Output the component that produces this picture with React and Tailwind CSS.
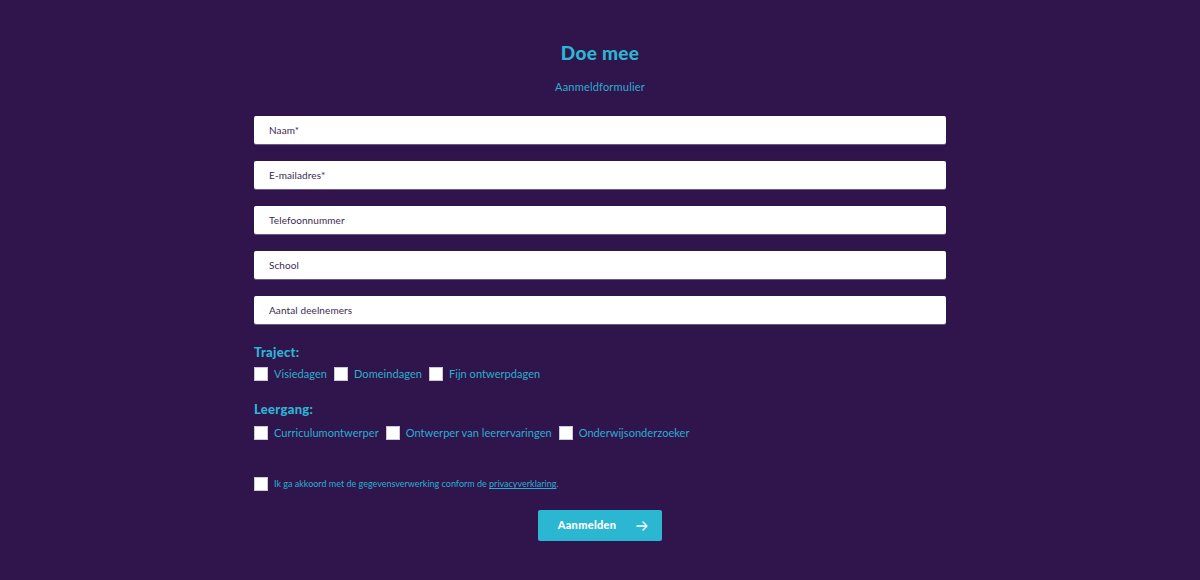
import React from "react";

const Box = () => (
  <span className="inline-block w-[14px] h-[14px] bg-white border border-[#c8c8d8] shrink-0" />
);

const Check = ({ label }) => (
  <label className="flex items-center gap-[6px]">
    <Box />
    <span className="text-[11px] text-[#2aaecf] tracking-[0.05px]">{label}</span>
  </label>
);

const Field = ({ ph }) => (
  <div className="h-[28px] bg-white rounded-[2px] flex items-center px-[15px] shadow-[0_1px_0_#6a5a8a]">
    <span className="text-[10px] text-[#3b2a52] tracking-[0.1px]">{ph}</span>
  </div>
);

export default function App() {
  return (
    <div
      className="w-[1200px] h-[580px] bg-[#30154c] flex flex-col items-center"
      style={{ fontFamily: "Lato, 'Open Sans', sans-serif" }}
    >
      <div className="w-[692px] flex flex-col">
        <h1 className="mt-[42px] text-center text-[19px] font-black text-[#2cb6d2] tracking-[0.3px] leading-[22px]">
          Doe mee
        </h1>
        <p className="mt-[16px] text-center text-[11px] text-[#2aaecf] leading-[14px] tracking-[0.2px]">
          Aanmeldformulier
        </p>
        <div className="mt-[22px] flex flex-col gap-[17px]">
          <Field ph="Naam*" />
          <Field ph="E-mailadres*" />
          <Field ph="Telefoonnummer" />
          <Field ph="School" />
          <Field ph="Aantal deelnemers" />
        </div>
        <div className="mt-[20px] text-[13px] font-black text-[#2cb6d2] leading-[16px] tracking-[0.3px]">
          Traject:
        </div>
        <div className="mt-[6px] flex items-center gap-[7px]">
          <Check label="Visiedagen" />
          <Check label="Domeindagen" />
          <Check label="Fijn ontwerpdagen" />
        </div>
        <div className="mt-[18px] text-[13px] font-black text-[#2cb6d2] leading-[16px] tracking-[0.3px]">
          Leergang:
        </div>
        <div className="mt-[8px] flex items-center gap-[7px]">
          <Check label="Curriculumontwerper" />
          <Check label="Ontwerper van leerervaringen" />
          <Check label="Onderwijsonderzoeker" />
        </div>
        <div className="mt-[36px] flex items-center gap-[6px]">
          <Box />
          <span className="text-[9px] text-[#2aaecf]">
            Ik ga akkoord met de gegevensverwerking conform de{" "}
            <span className="underline">privacyverklaring</span>.
          </span>
        </div>
        <div className="mt-[19px] flex justify-center">
          <button className="w-[124px] h-[31px] bg-[#2bb7d1] rounded-[2px] flex items-center justify-center gap-[20px] text-white text-[11px] font-black tracking-[0.3px]">
            <span className="ml-[6px]">Aanmelden</span>
            <svg width="12" height="10" viewBox="0 0 12 10" fill="none" stroke="white" strokeWidth="1.4" strokeLinecap="round" strokeLinejoin="round">
              <path d="M1 5h10M7 1l4 4-4 4" />
            </svg>
          </button>
        </div>
      </div>
    </div>
  );
}
